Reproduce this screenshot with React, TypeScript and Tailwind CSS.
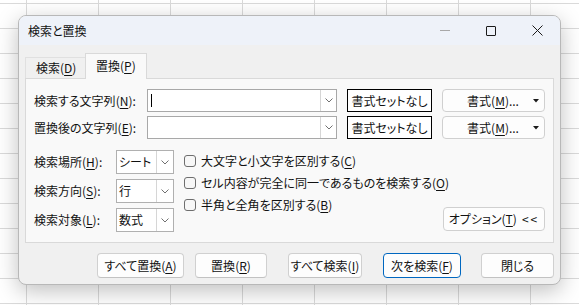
import React from "react";

function Key({ text, k, after = "" }: { text: string; k: string; after?: string }) {
  return (
    <>
      {text}(<span className="underline decoration-1 underline-offset-[2px]">{k}</span>){after}
    </>
  );
}

function Chevron() {
  return (
    <svg width="8" height="5" viewBox="0 0 8 5" fill="none">
      <path d="M0.5 0.5 L4 4 L7.5 0.5" stroke="#707070" strokeWidth="1" />
    </svg>
  );
}

function TextCombo({ caret = false }: { caret?: boolean }) {
  return (
    <div className="flex h-[23px] w-[190px] border border-[#a8a8a8] bg-white">
      <div className="flex flex-1 items-center pl-[3px]">
        {caret && <div className="h-[13px] w-px bg-black" />}
      </div>
      <div className="flex w-[16px] items-center justify-center border-l border-[#d6d6d6]">
        <Chevron />
      </div>
    </div>
  );
}

function Select({ value }: { value: string }) {
  return (
    <div className="flex h-[24px] w-[58px] border border-[#b0b0b0] bg-white">
      <div className="flex flex-1 items-center pl-[2px]">{value}</div>
      <div className="flex w-[17px] items-center justify-center border-l border-[#d6d6d6]">
        <Chevron />
      </div>
    </div>
  );
}

function Check({ children }: { children: React.ReactNode }) {
  return (
    <div className="flex h-[22px] items-center whitespace-nowrap">
      <div className="h-[12px] w-[12px] shrink-0 rounded-[3px] border border-[#6e6e6e] bg-[#f7f7f7]" />
      <span className="ml-[5px]">{children}</span>
    </div>
  );
}

function Btn({ w, children, primary = false }: { w: string; children: React.ReactNode; primary?: boolean }) {
  return (
    <div
      className={
        "flex h-[25px] items-center justify-center rounded-[4px] border bg-[#fdfdfd] " +
        w +
        (primary ? " border-[#0067c0]" : " border-[#d0d0d0] border-b-[#c2c2c2]")
      }
    >
      {children}
    </div>
  );
}

function FormatBtn() {
  return (
    <div className="ml-[10px] flex h-[23px] w-[103px] items-center rounded-[4px] border border-[#d0d0d0] bg-[#fdfdfd] pl-[10px] pr-[5px]">
      <span className="flex-1 text-center">
        <Key text="書式" k="M" after="..." />
      </span>
      <svg width="6" height="4" viewBox="0 0 6 4">
        <path d="M0 0 L6 0 L3 3.5 Z" fill="#1b1b1b" />
      </svg>
    </div>
  );
}

export default function App() {
  return (
    <div className="h-[305px] w-[579px] overflow-hidden bg-white bg-[linear-gradient(to_right,#dadada_1px,transparent_1px),linear-gradient(to_bottom,#dadada_1px,transparent_1px)] bg-size-[72px_25px] bg-position-[26px_3px] pl-[18px] pt-[15px] font-['Noto_Sans_CJK_JP','Noto_Sans',sans-serif] text-[12px] leading-[16px] text-[#111] [font-feature-settings:'palt']">
      <div className="flex h-[270px] w-[543px] flex-col overflow-hidden rounded-[8px] border border-[#b8b8b8] bg-[#f0f0f0] shadow-[0_6px_22px_rgba(0,0,0,0.25)]">
        {/* title bar */}
        <div className="flex h-[29px] items-center bg-[#eef2f9]">
          <span className="flex-1 pl-[9px]">検索と置換</span>
          <div className="flex h-full w-[46px] items-center justify-center">
            <div className="h-px w-[10px] bg-[#a8a8a8]" />
          </div>
          <div className="flex h-full w-[46px] items-center justify-center">
            <div className="h-[10px] w-[10px] rounded-[1px] border border-[#1b1b1b]" />
          </div>
          <div className="flex h-full w-[46px] items-center justify-center">
            <svg width="11" height="11" viewBox="0 0 11 11">
              <path d="M0.5 0.5 L10.5 10.5 M10.5 0.5 L0.5 10.5" stroke="#1b1b1b" strokeWidth="1" />
            </svg>
          </div>
        </div>

        <div className="flex-1 px-[6px]">
          {/* tabs */}
          <div className="mt-[8px] flex h-[25px] items-end">
            <div className="flex h-[21px] w-[60px] items-center border-l border-t border-[#e0e0e0] pl-[10px]">
              <Key text="検索" k="D" />
            </div>
            <div className="relative z-10 -mb-px flex h-[26px] w-[62px] items-center border border-b-0 border-[#d9d9d9] bg-[#f9f9f9] pl-[10px] pb-[2px]">
              <Key text="置換" k="P" />
            </div>
          </div>

          {/* panel */}
          <div className="h-[165px] border border-[#d9d9d9] bg-[#f9f9f9] pl-[8px] pt-[10px]">
            <div className="flex h-[23px] items-center">
              <div className="w-[113px]">
                <Key text="検索する文字列" k="N" after=":" />
              </div>
              <TextCombo caret />
              <div className="ml-[10px] flex h-[23px] w-[85px] items-center justify-center border border-black bg-white">
                書式セットなし
              </div>
              <FormatBtn />
            </div>
            <div className="mt-[4px] flex h-[23px] items-center">
              <div className="w-[113px]">
                <Key text="置換後の文字列" k="E" after=":" />
              </div>
              <TextCombo />
              <div className="ml-[10px] flex h-[23px] w-[85px] items-center justify-center border border-black bg-white">
                書式セットなし
              </div>
              <FormatBtn />
            </div>

            <div className="mt-[11px] flex items-start">
              <div className="flex flex-col gap-[5px]">
                <div className="flex h-[24px] items-center">
                  <div className="w-[82px]">
                    <Key text="検索場所" k="H" after=":" />
                  </div>
                  <Select value="シート" />
                </div>
                <div className="flex h-[24px] items-center">
                  <div className="w-[82px]">
                    <Key text="検索方向" k="S" after=":" />
                  </div>
                  <Select value="行" />
                </div>
                <div className="flex h-[24px] items-center">
                  <div className="w-[82px]">
                    <Key text="検索対象" k="L" after=":" />
                  </div>
                  <Select value="数式" />
                </div>
              </div>
              <div className="ml-[10px] flex w-[259px] flex-col">
                <Check>
                  <Key text="大文字と小文字を区別する" k="C" />
                </Check>
                <Check>
                  <Key text="セル内容が完全に同一であるものを検索する" k="O" />
                </Check>
                <Check>
                  <Key text="半角と全角を区別する" k="B" />
                </Check>
              </div>
              <div className="mt-[57px] flex h-[24px] w-[102px] items-center justify-center rounded-[4px] border border-[#d0d0d0] bg-[#fdfdfd]">
                <Key text="オプション" k="T" />
                <span className="ml-[5px] tracking-[2px]">&lt;&lt;</span>
              </div>
            </div>
          </div>

          {/* buttons */}
          <div className="mt-[10px] flex justify-end">
            <Btn w="w-[87px]">
              <Key text="すべて置換" k="A" />
            </Btn>
            <div className="w-[11px]" />
            <Btn w="w-[72px]">
              <Key text="置換" k="R" />
            </Btn>
            <div className="w-[21px]" />
            <Btn w="w-[74px]">
              <Key text="すべて検索" k="I" />
            </Btn>
            <div className="w-[21px]" />
            <Btn w="w-[78px]" primary>
              <Key text="次を検索" k="F" />
            </Btn>
            <div className="w-[20px]" />
            <Btn w="w-[73px]">閉じる</Btn>
          </div>
        </div>
      </div>
    </div>
  );
}
